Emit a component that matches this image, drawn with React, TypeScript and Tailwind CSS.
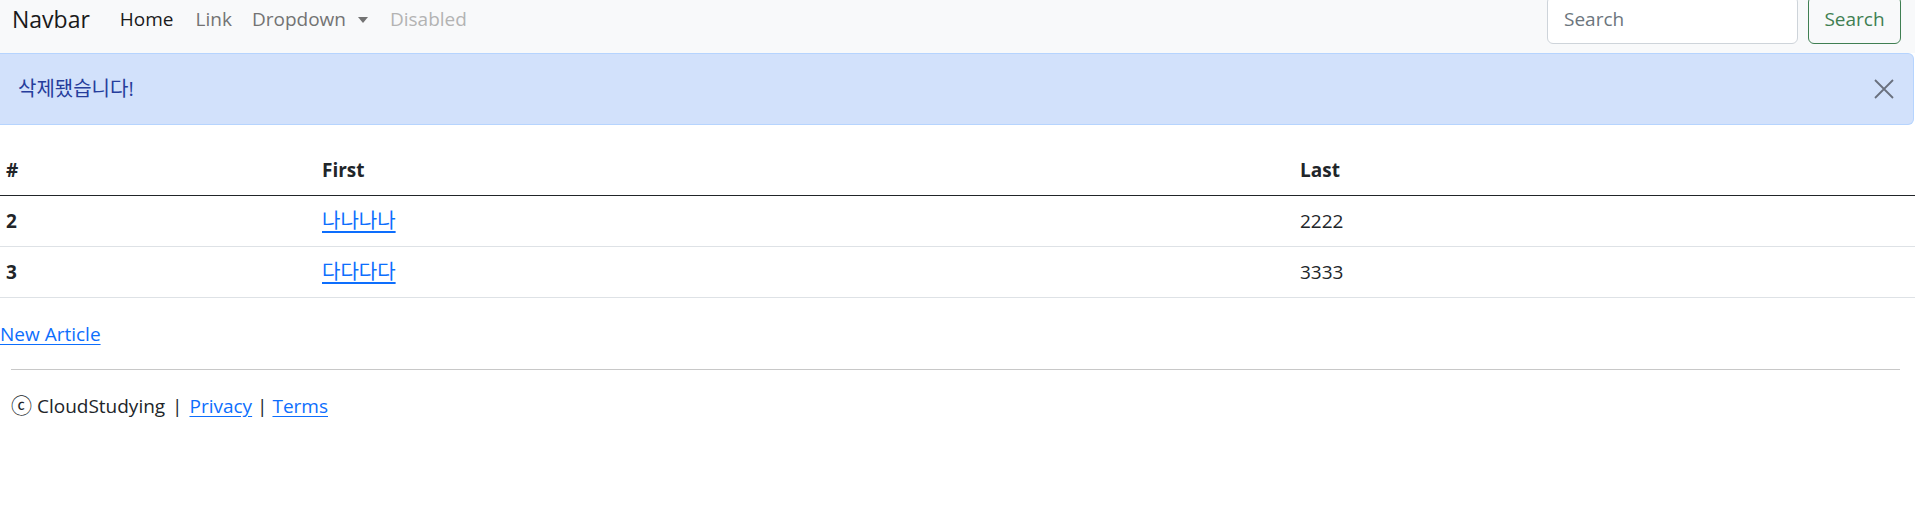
import React from 'react'

const rows = [
  { id: 2, first: '나나나나', last: '2222' },
  { id: 3, first: '다다다다', last: '3333' },
]

export default function App() {
  const rowList = rows.map((row) =>
    <tr key={row.id}>
      <td className="h-[51px] pl-[6px] font-bold border-b border-[#dee2e6]">{row.id}</td>
      <td className="h-[51px] pl-[6px] border-b border-[#dee2e6]">
        <a href="#" className="text-[20px] text-[#0d6efd] underline underline-offset-[3px]">{row.first}</a>
      </td>
      <td className="h-[51px] pl-[6px] border-b border-[#dee2e6]">{row.last}</td>
    </tr>
  )
  return (
    <main className="h-[516px] overflow-hidden bg-white text-[19px] text-[#212529] font-['Open_Sans','Noto_Sans_CJK_KR',sans-serif]">
      <nav className="h-[53px] flex items-center pb-[14px] bg-[#f8f9fa] pl-[12px] pr-[14px]">
        <span className="text-[23px] text-[#1a1a1a] mr-[30px]">Navbar</span>
        <ul className="flex items-center gap-[20px]">
          <li className="text-[#1a1a1a] mr-[2px]">Home</li>
          <li className="text-[#737373]">Link</li>
          <li className="text-[#737373] flex items-center gap-[12px]">
            Dropdown
            <span className="w-0 h-0 border-x-[5px] border-x-transparent border-t-[6px] border-t-[#737373]"></span>
          </li>
          <li className="text-[#b3b3b3] ml-[2px]">Disabled</li>
        </ul>
        <form className="ml-auto flex items-center gap-[10px]">
          <div className="w-[251px] h-[48px] flex items-center pl-[16px] bg-white border border-[#ced4da] rounded-[6px] text-[#6c757d]">Search</div>
          <div className="w-[93px] h-[48px] flex items-center justify-center border border-[#3f7f52] rounded-[6px] text-[#3f7f52]">Search</div>
        </form>
      </nav>
      <div className="h-[72px] mr-px flex items-center justify-between pl-[18px] pr-[19px] bg-[#d2e1fb] border border-l-0 border-[#b6d4fe] rounded-r-[6px] text-[#263d9c]">
        <span className="text-[20px]">삭제됐습니다!</span>
        <svg width="20" height="20" viewBox="0 0 20 20" className="text-[#6a707e]">
          <path d="M1 1 L19 19 M19 1 L1 19" stroke="currentColor" strokeWidth="1.8" />
        </svg>
      </div>
      <table className="w-full mt-[20px] border-separate border-spacing-0 text-left">
        <thead>
          <tr>
            <th className="h-[51px] w-[316px] pl-[6px] font-bold border-b border-[#212529]">#</th>
            <th className="h-[51px] w-[978px] pl-[6px] font-bold border-b border-[#212529]">First</th>
            <th className="h-[51px] pl-[6px] font-bold border-b border-[#212529]">Last</th>
          </tr>
        </thead>
        <tbody>{rowList}</tbody>
      </table>
      <div className="mt-[21px] leading-[30px]">
        <a href="#" className="text-[#0d6efd] underline underline-offset-[3px]">New Article</a>
      </div>
      <footer className="pl-[11px] pr-[15px]">
        <hr className="mt-[20px] border-t border-[#c8c8c8]" />
        <p className="mt-[20px] leading-[30px]">
          <span className="text-[21px]">ⓒ</span> CloudStudying <span className="mx-[2px]">|</span> <a href="#" className="text-[#0d6efd] underline underline-offset-[3px]">Privacy</a> <span>|</span> <a href="#" className="text-[#0d6efd] underline underline-offset-[3px]">Terms</a>
        </p>
      </footer>
    </main>
  )
}
